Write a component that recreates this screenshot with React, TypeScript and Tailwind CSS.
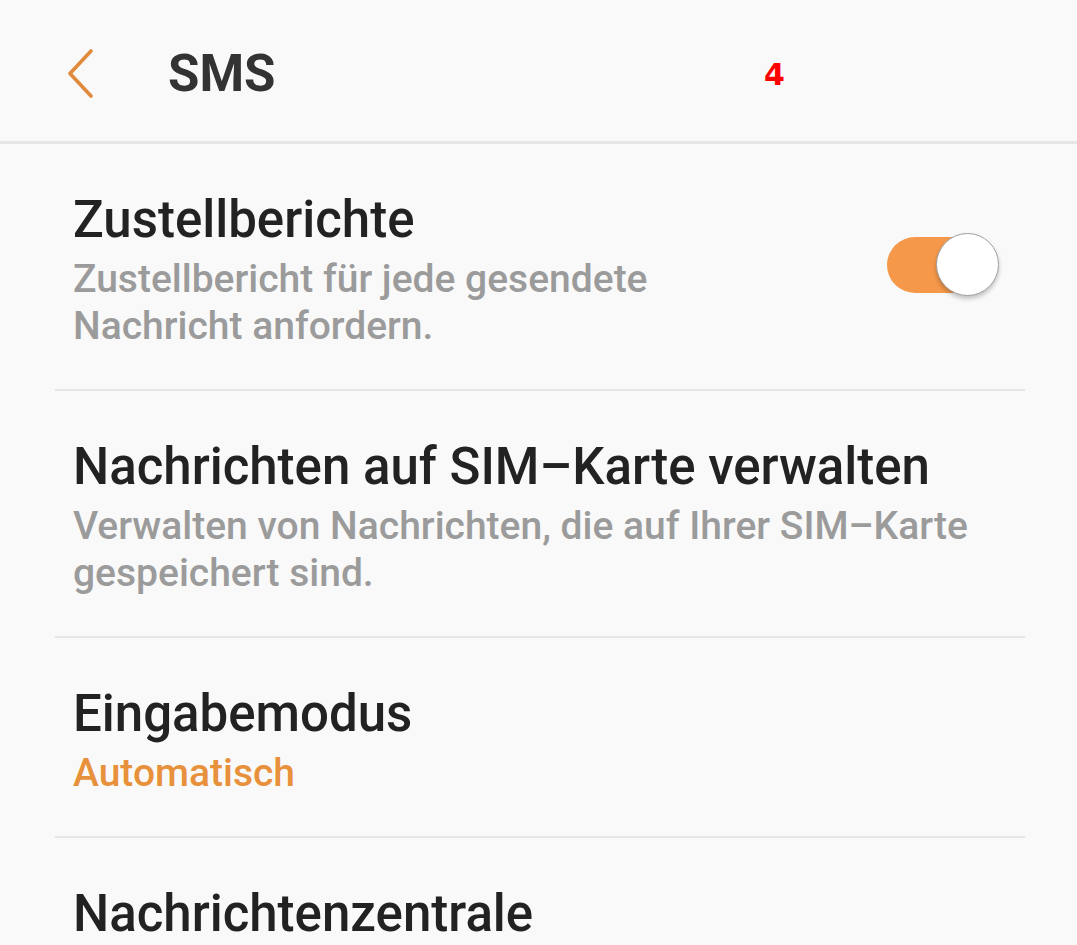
import React from 'react'

function BackChevron() {
  return (
    <svg width="36" height="50" viewBox="0 0 36 50" className="shrink-0">
      <path d="M27 2 L6 24.5 L27 47" fill="none" stroke="#e08a3c" strokeWidth="3.6" strokeLinecap="round" strokeLinejoin="round" />
    </svg>
  )
}

function Toggle({ on }: { on: boolean }) {
  return (
    <div className="relative h-[64px] w-[112px] shrink-0">
      <div className={`absolute left-0 top-[4px] h-[56px] w-[97px] rounded-full ${on ? 'bg-[#f5984a]' : 'bg-[#c8c8c8]'}`} />
      <div className="absolute left-[49px] top-0 h-[63px] w-[63px] rounded-full border border-[#a0a0a0] bg-white shadow-[0_3px_4px_rgba(0,0,0,0.22)]" />
    </div>
  )
}

function Row({
  title,
  sub,
  accent,
  right,
  last,
}: {
  title: string
  sub?: string
  accent?: boolean
  right?: React.ReactNode
  last?: boolean
}) {
  return (
    <div className={`flex items-start gap-6 px-[18px] pt-[46px] ${last ? '' : 'border-b-2 border-[#e6e6e6] pb-[39px]'}`}>
      <div className="min-w-0 flex-1">
        <div className="text-[51px] font-medium leading-[60px] text-[#222222]">{title}</div>
        {sub && (
          <div
            className={`mt-[6px] whitespace-pre-line text-[39px] font-medium leading-[47px] ${accent ? 'text-[#e8913c]' : 'text-[#9b9b9b]'}`}
          >
            {sub}
          </div>
        )}
      </div>
      {right}
    </div>
  )
}

export default function App() {
  return (
    <div className="h-[945px] w-full overflow-hidden bg-[#f9f9f9]" style={{ fontFamily: 'Roboto, "Noto Sans", sans-serif' }}>
      <header className="relative flex h-[144px] items-center border-b-[3px] border-[#e6e6e6] pl-[64px] pt-[6px]">
        <BackChevron />
        <h1 className="ml-[68px] text-[51px] font-bold leading-none text-[#333333]">SMS</h1>
        <span
          className="absolute left-[764px] top-[60px] text-[30px] font-bold leading-none text-[#ff0000]"
          style={{ fontFamily: '"DejaVu Sans", sans-serif' }}
        >
          4
        </span>
      </header>
      <div className="mx-[55px] w-[970px]">
        <Row
          title="Zustellberichte"
          sub={'Zustellbericht für jede gesendete\nNachricht anfordern.'}
          right={
            <div className="mr-[8px] mt-[43px]">
              <Toggle on />
            </div>
          }
        />
        <Row title="Nachrichten auf SIM–Karte verwalten" sub="Verwalten von Nachrichten, die auf Ihrer SIM–Karte gespeichert sind." />
        <Row title="Eingabemodus" sub="Automatisch" accent />
        <Row title="Nachrichtenzentrale" last />
      </div>
    </div>
  )
}
